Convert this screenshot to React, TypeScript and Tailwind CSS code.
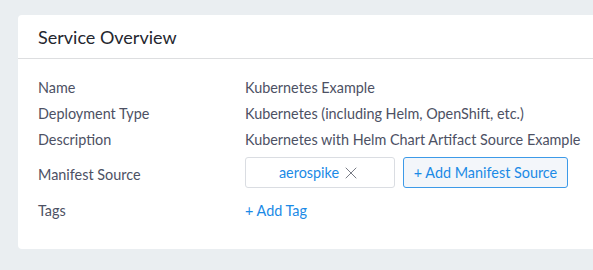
import { X } from "lucide-react";

const rows = [
    { label: "Name", value: "Kubernetes Example" },
    { label: "Deployment Type", value: "Kubernetes (including Helm, OpenShift, etc.)" },
    { label: "Description", value: "Kubernetes with Helm Chart Artifact Source Example" },
];

const App = () => {
    return (
        <div className="min-h-screen bg-[#eaeef1] pt-[15px] pl-[18px] font-['Lato',sans-serif]">
            <div className="bg-white rounded-l-[4px] w-[575px] h-[234px]">
                <div className="h-[44px] border-b border-[#dddee0] pl-[20px] flex items-center">
                    <h2 className="text-[18px] text-[#24262e] pt-[2px]">Service Overview</h2>
                </div>
                <div className="pl-[20px] pt-[16px] text-[14.4px] text-[#4d5164]">
                    {rows.map((r) => (
                        <div key={r.label} className="flex h-[26px] items-center">
                            <span className="w-[207px]">{r.label}</span>
                            <span>{r.value}</span>
                        </div>
                    ))}
                    <div className="flex items-center mt-[4px] h-[31px]">
                        <span className="w-[207px] pt-[5px]">Manifest Source</span>
                        <div className="w-[150px] h-[31px] border border-[#dadde2] rounded-[3px] flex items-center justify-center gap-[2px] text-[#1b8ae6]">
                            aerospike
                            <X className="w-[20px] h-[20px] text-[#6b6f7a]" strokeWidth={1.1} />
                        </div>
                        <button className="ml-[8px] w-[165px] h-[31px] border border-[#3d9ae8] rounded-[3px] bg-[#f3f6fa] text-[#1b8ae6]">
                            + Add Manifest Source
                        </button>
                    </div>
                    <div className="flex h-[26px] items-center mt-[10px]">
                        <span className="w-[207px]">Tags</span>
                        <span className="text-[#1b8ae6]">+ Add Tag</span>
                    </div>
                </div>
            </div>
        </div>
    );
};

export default App;
